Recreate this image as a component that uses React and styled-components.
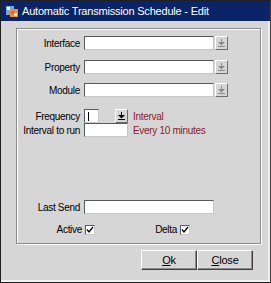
import React from 'react'
import styled, { createGlobalStyle } from 'styled-components'

const Global = createGlobalStyle`
    html, body {
        margin: 0;
        padding: 0;
        background: #d6d6d6;
    }
    body {
        font-family: "Liberation Sans", Arial, sans-serif;
        font-size: 10px;
        letter-spacing: -0.3px;
    }
`

const Window = styled.div`
    box-sizing: border-box;
    width: 271px;
    height: 283px;
    border: 1px solid #202020;
    border-right-color: #404040;
    background: #d6d6d6;
    display: flex;
    flex-direction: column;
    box-shadow: inset -2px -2px 0 #f0f0f0;
`

const TitleBar = styled.div`
    height: 20px;
    background: #0b2468;
    color: #fff;
    display: flex;
    align-items: center;
    gap: 3px;
    padding-left: 4px;
    font-size: 11px;
    letter-spacing: -0.2px;
`

const Body = styled.div`
    flex: 1;
    display: flex;
    flex-direction: column;
    padding: 7px 8px 0 15px;
`

const Group = styled.div`
    box-sizing: border-box;
    width: 245px;
    height: 216px;
    border: 1px solid #8c8c8c;
    box-shadow: inset 1px 1px 0 #fff, 1px 1px 0 #fff;
    padding: 7px 0 0 0;
    display: flex;
    flex-direction: column;
`

const Row = styled.div`
    display: flex;
    align-items: center;
    height: 14px;
    margin-top: ${p => p.$top || 0}px;
`

const Label = styled.span`
    width: 63px;
    text-align: right;
    padding-right: 4px;
    color: #000;
    white-space: nowrap;
    flex-shrink: 0;
`

const Input = styled.div`
    box-sizing: border-box;
    width: ${p => p.$w}px;
    height: 14px;
    background: #fff;
    border: 1px solid #5a5a5a;
    border-right-color: #c8c8c8;
    border-bottom-color: #c8c8c8;
    display: flex;
    align-items: center;
    padding-left: 3px;
`

const Caret = styled.span`
    width: 1px;
    height: 9px;
    background: #000;
`

const DropButton = styled.div`
    box-sizing: border-box;
    width: 13px;
    height: 14px;
    margin-left: ${p => p.$gap || 1}px;
    background: #d6d6d6;
    border: 1px solid #fff;
    border-right-color: #6c6c6c;
    border-bottom-color: #6c6c6c;
    display: flex;
    align-items: center;
    justify-content: center;
`

const Note = styled.span`
    color: #8b1a2a;
    margin-left: 5px;
    white-space: nowrap;
`

const CheckRow = styled.div`
    display: flex;
    align-items: center;
    margin-top: 10px;
`

const CheckLabel = styled.span`
    width: ${p => p.$w}px;
    text-align: right;
    padding-right: 3px;
    white-space: nowrap;
`

const Box = styled.div`
    box-sizing: border-box;
    width: 10px;
    height: 10px;
    background: #fff;
    border: 1px solid #5a5a5a;
    border-right-color: #c8c8c8;
    border-bottom-color: #c8c8c8;
    display: flex;
    align-items: center;
    justify-content: center;
`

const Footer = styled.div`
    display: flex;
    justify-content: flex-end;
    padding: 6px 9px 0 0;
`

const Button = styled.button`
    box-sizing: border-box;
    width: 56px;
    height: 20px;
    margin: 0;
    background: #d6d6d6;
    border: 1px solid #fff;
    border-right-color: #404040;
    border-bottom-color: #404040;
    box-shadow: inset -1px -1px 0 #8c8c8c;
    font-family: "Liberation Sans", Arial, sans-serif;
    font-size: 11px;
    letter-spacing: -0.2px;
    color: #000;
    padding: 0;
    u { text-decoration: underline; }
`

const Arrow = ({ faded }) => (
    <svg width="7" height="8" viewBox="0 0 7 8">
        <g fill={faded ? '#8a8a8a' : '#000'}>
            <rect x="3" y="0" width="1" height="3" />
            <polygon points="0,3 7,3 3.5,6.5" />
            <rect x="0" y="7" width="7" height="1" />
        </g>
    </svg>
)

const Check = () => (
    <svg width="8" height="8" viewBox="0 0 8 8">
        <polyline points="1,3.5 3,6 7,1" fill="none" stroke="#000" strokeWidth="1.3" />
    </svg>
)

const AppIcon = () => (
    <svg width="14" height="14" viewBox="0 0 14 14">
        <rect x="1" y="2" width="8" height="9" fill="#6fa8dc" />
        <rect x="5" y="5" width="8" height="8" fill="#e69138" />
        <rect x="6" y="7" width="3" height="3" fill="#cc4fc4" />
        <rect x="9" y="9" width="3" height="3" fill="#ffe066" />
        <rect x="2" y="3" width="3" height="3" fill="#fff" />
    </svg>
)

const ComboRow = ({ label, top }) => (
    <Row $top={top}>
        <Label>{label}</Label>
        <Input $w={130} />
        <DropButton><Arrow faded /></DropButton>
    </Row>
)

export default function App() {
    return (
        <>
            <Global />
            <Window>
                <TitleBar>
                    <AppIcon />
                    <span>Automatic Transmission Schedule - Edit</span>
                </TitleBar>
                <Body>
                    <Group>
                        <ComboRow label="Interface" top={0} />
                        <ComboRow label="Property" top={10} />
                        <ComboRow label="Module" top={9} />
                        <Row $top={12}>
                            <Label>Frequency</Label>
                            <Input $w={15}><Caret /></Input>
                            <DropButton $gap={16}><Arrow /></DropButton>
                            <Note>Interval</Note>
                        </Row>
                        <Row $top={0}>
                            <Label>Interval to run</Label>
                            <Input $w={44} />
                            <Note>Every 10 minutes</Note>
                        </Row>
                        <Row $top={63}>
                            <Label>Last Send</Label>
                            <Input $w={130} />
                        </Row>
                        <CheckRow>
                            <CheckLabel $w={65}>Active</CheckLabel>
                            <Box><Check /></Box>
                            <CheckLabel $w={82}>Delta</CheckLabel>
                            <Box><Check /></Box>
                        </CheckRow>
                    </Group>
                    <Footer>
                        <Button><u>O</u>k</Button>
                        <Button><u>C</u>lose</Button>
                    </Footer>
                </Body>
            </Window>
        </>
    )
}
